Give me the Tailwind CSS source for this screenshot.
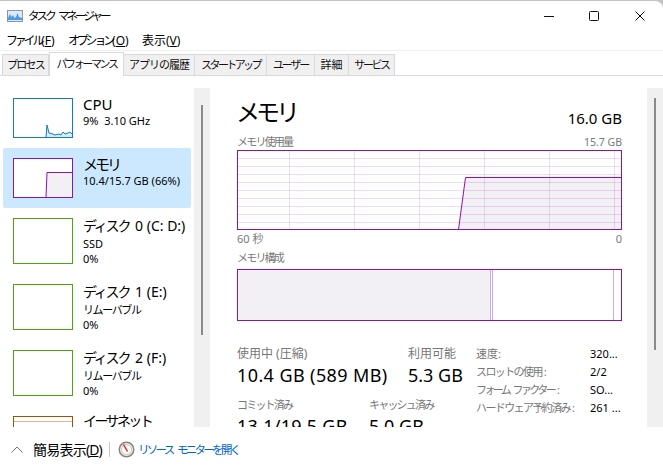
<!DOCTYPE html>
<html lang="ja">
<head>
  <meta charset="UTF-8" />
  <title>タスク マネージャー</title>
  <script src="https://cdn.jsdelivr.net/npm/@tailwindcss/browser@4"></script>
</head>
<body class="w-[663px] h-[472px] overflow-hidden bg-[#c4c4c4] font-['Noto_Sans','Noto_Sans_CJK_JP',sans-serif] text-black">
  <div class="w-full h-[471px] mt-px bg-white rounded-tr-lg flex flex-col overflow-hidden">

    <!-- title bar -->
    <div class="h-[29px] flex items-center shrink-0 relative">
      <svg class="ml-[7px] mr-[5px]" width="16" height="12" viewBox="0 0 16 12">
        <rect x="0.5" y="0.5" width="15" height="11" fill="#dce9f6" stroke="#8c95a0" />
        <path d="M1 10V8L3 4L4.5 7L6 5L7.5 8L9 7L10.5 3L12 7L15 8V10Z" fill="#4a9be0" />
      </svg>
      <span class="text-[11.5px] tracking-[-2.9px] [word-spacing:4px] whitespace-nowrap">タスク マネージャー</span>
      <div class="ml-auto flex items-center">
        <svg class="mr-[35px]" width="10" height="10" viewBox="0 0 10 10"><path d="M0 5.5H10" stroke="#111" /></svg>
        <svg class="mr-[36px]" width="10" height="10" viewBox="0 0 10 10"><rect x="0.5" y="0.5" width="9" height="9" rx="1" fill="none" stroke="#111" /></svg>
        <svg class="mr-[18px]" width="10" height="10" viewBox="0 0 10 10"><path d="M0.5 0.5L9.5 9.5M9.5 0.5L0.5 9.5" stroke="#111" /></svg>
      </div>
    </div>

    <!-- menu -->
    <div class="h-[20px] flex items-center pt-[2px] pl-[6px] text-[12px] shrink-0 whitespace-nowrap">
      <span class="w-[62px]"><span class="tracking-[-3.2px]">ファイル</span>(<span class="underline">F</span>)</span>
      <span class="w-[74px]"><span class="tracking-[-3.2px]">オプション</span>(<span class="underline">O</span>)</span>
      <span>表示(<span class="underline">V</span>)</span>
    </div>
    <div class="h-px bg-[#f0f0f0] shrink-0"></div>

    <!-- tabs -->
    <div class="h-[25px] flex items-end pl-[2px] border-b border-[#d9d9d9] shrink-0 text-[11px] text-[#111] whitespace-nowrap">
      <div class="w-[47px] h-[21px] flex items-center justify-center bg-[#f0f0f0] border border-b-0 border-[#d9d9d9] tracking-[-1.75px]">プロセス</div>
      <div class="w-[75px] h-[24px] flex items-center justify-center bg-white border border-b-0 border-[#d9d9d9] -mb-px tracking-[-2.4px]">パフォーマンス</div>
      <div class="w-[71px] h-[21px] flex items-center justify-center bg-[#f0f0f0] border border-l-0 border-b-0 border-[#d9d9d9] tracking-[-1px]">アプリの履歴</div>
      <div class="w-[72px] h-[21px] flex items-center justify-center bg-[#f0f0f0] border border-l-0 border-b-0 border-[#d9d9d9] tracking-[-2.6px]">スタートアップ</div>
      <div class="w-[48px] h-[21px] flex items-center justify-center bg-[#f0f0f0] border border-l-0 border-b-0 border-[#d9d9d9] tracking-[-2.25px]">ユーザー</div>
      <div class="w-[34px] h-[21px] flex items-center justify-center bg-[#f0f0f0] border border-l-0 border-b-0 border-[#d9d9d9]">詳細</div>
      <div class="w-[46px] h-[21px] flex items-center justify-center bg-[#f0f0f0] border border-l-0 border-b-0 border-[#d9d9d9] tracking-[-2.4px]">サービス</div>
    </div>

    <!-- panes -->
    <div class="h-[339px] mt-[12px] flex shrink-0">

      <!-- sidebar -->
      <div class="w-[194px] pl-[3px] pr-[3px] overflow-hidden shrink-0">
        <div class="h-[60px] flex items-center pl-[10px]">
          <svg class="shrink-0" width="60" height="40" viewBox="0 0 60 40">
            <path d="M33 39V27L34 27L36 35L40 36L42 37L46 36L48 37L50 34L52 36L55 35L57 34L59 36V39Z" fill="#d9ebf6" />
            <path d="M33 39L34 27L36 35L40 36L42 37L46 36L48 37L50 34L52 36L55 35L57 34L59 36" fill="none" stroke="#117dbb" />
            <rect x="0.5" y="0.5" width="59" height="39" fill="none" stroke="#117dbb" />
          </svg>
          <div class="ml-[10px] self-start mt-[6px]">
            <div class="text-[15px] leading-[20px]">CPU</div>
            <div class="text-[11px] leading-[14px]">9%&nbsp; 3.10 GHz</div>
          </div>
        </div>
        <div class="h-[60px] flex items-center pl-[10px] bg-[#cce8ff] rounded-[2px]">
          <svg class="shrink-0" width="60" height="40" viewBox="0 0 60 40">
            <rect width="60" height="40" fill="#fff" />
            <path d="M33 39.5L34.5 14.5H59.5V39.5Z" fill="#f2f0f4" />
            <path d="M33 39.5L34 14.5H59.5" fill="none" stroke="#8b12ae" />
            <rect x="0.5" y="0.5" width="59" height="39" fill="none" stroke="#8b12ae" />
          </svg>
          <div class="ml-[10px] self-start mt-[6px] whitespace-nowrap">
            <div class="text-[15px] leading-[20px] tracking-[-3px]">メモリ</div>
            <div class="text-[11px] leading-[14px]">10.4/15.7 GB (66%)</div>
          </div>
        </div>
        <div class="h-[66px] flex items-center pl-[10px]">
          <div class="w-[60px] h-[46px] border border-[#4da60c] shrink-0"></div>
          <div class="ml-[10px] whitespace-nowrap -mt-px">
            <div class="text-[14px] leading-[20px]"><span class="tracking-[-2.2px]">ディス</span>ク 0 (C: D:)</div>
            <div class="text-[11px] leading-[15px]">SSD</div>
            <div class="text-[11px] leading-[15px]">0%</div>
          </div>
        </div>
        <div class="h-[66px] flex items-center pl-[10px]">
          <div class="w-[60px] h-[46px] border border-[#4da60c] shrink-0"></div>
          <div class="ml-[10px] whitespace-nowrap -mt-px">
            <div class="text-[14px] leading-[20px]"><span class="tracking-[-2.2px]">ディス</span>ク 1 (E:)</div>
            <div class="text-[11px] leading-[15px] tracking-[-1.4px]">リムーバブル</div>
            <div class="text-[11px] leading-[15px]">0%</div>
          </div>
        </div>
        <div class="h-[66px] flex items-center pl-[10px]">
          <div class="w-[60px] h-[46px] border border-[#4da60c] shrink-0"></div>
          <div class="ml-[10px] whitespace-nowrap -mt-px">
            <div class="text-[14px] leading-[20px]"><span class="tracking-[-2.2px]">ディス</span>ク 2 (F:)</div>
            <div class="text-[11px] leading-[15px] tracking-[-1.4px]">リムーバブル</div>
            <div class="text-[11px] leading-[15px]">0%</div>
          </div>
        </div>
        <div class="h-[66px] flex items-start pl-[10px] pt-[10px]">
          <div class="w-[60px] h-[46px] border border-[#a74f01] shrink-0">
            <div class="h-px mt-[4px] bg-[#e0b48c]"></div>
          </div>
          <div class="ml-[10px] -mt-[5px] text-[14px] leading-[20px] tracking-[-2.6px]">イーサネット</div>
        </div>
      </div>

      <!-- sidebar scrollbar -->
      <div class="w-[16px] bg-[#f0f0f0] shrink-0 pt-[17px] pl-[7px]">
        <div class="w-[2px] h-[230px] bg-[#8a8a8a]"></div>
      </div>

      <!-- detail -->
      <div class="w-[437px] pl-[27px] pr-[25px] overflow-hidden shrink-0">
        <div class="h-[45px] flex items-end justify-between">
          <div class="text-[24px] leading-[42px] tracking-[-4px] -ml-px">メモリ</div>
          <div class="text-[15px] leading-[26px] pb-[2px]">16.0 GB</div>
        </div>
        <div class="h-[17px] pt-[2px] flex items-center justify-between text-[#777]">
          <span class="text-[11px] tracking-[-1.8px]">メモリ使用量</span>
          <span class="text-[10.5px]">15.7 GB</span>
        </div>
        <svg class="block" width="385" height="80" viewBox="0 0 385 80">
          <path d="M221.5 79.5L228.5 27.5H385V80H221.5Z" fill="#f2f0f4" />
          <path d="M0 8.5H385M0 16.5H385M0 24.5H385M0 32.5H385M0 40.5H385M0 48.5H385M0 56.5H385M0 64.5H385M0 72.5H385M52.5 0V80M117.5 0V80M182.5 0V80M247.5 0V80M312.5 0V80M377.5 0V80" stroke="#8b12ae" stroke-opacity="0.15" />
          <path d="M221.5 79.5L228.5 27.5H385" fill="none" stroke="#8b12ae" />
          <rect x="0.5" y="0.5" width="384" height="79" fill="none" stroke="#8b12ae" />
        </svg>
        <div class="h-[18px] flex items-center justify-between text-[11px] text-[#777]">
          <span>60 秒</span>
          <span>0</span>
        </div>
        <div class="h-[21px] flex items-center text-[11px] text-[#777] tracking-[-1.8px]">メモリ構成</div>
        <div class="h-[52px] flex border border-[#8b12ae]">
          <div class="w-[253px] bg-[#f2f0f4] border-r border-[#d3a9df]"></div>
          <div class="w-[2px] border-r border-[#d3a9df]"></div>
          <div class="w-[121px] border-r border-[#d3a9df]"></div>
        </div>

        <!-- stats -->
        <div class="mt-[25px] flex">
          <div class="w-[239px] shrink-0">
            <div class="flex">
              <div class="w-[171px]">
                <div class="text-[12px] leading-[16px] text-[#777]">使用中 (圧縮)</div>
                <div class="text-[18px] leading-[26px] whitespace-nowrap tracking-[0.4px]">10.4 GB (589 MB)</div>
              </div>
              <div>
                <div class="text-[12px] leading-[16px] text-[#777]">利用可能</div>
                <div class="text-[18px] leading-[26px] whitespace-nowrap">5.3 GB</div>
              </div>
            </div>
            <div class="flex mt-[9px]">
              <div class="w-[132px]">
                <div class="text-[11px] leading-[16px] text-[#777] tracking-[-1.8px]">コミット済み</div>
                <div class="text-[18px] leading-[26px] whitespace-nowrap tracking-[0.25px]">13.1/19.5 GB</div>
              </div>
              <div>
                <div class="text-[11px] leading-[16px] text-[#777] tracking-[-1.8px]">キャッシュ済み</div>
                <div class="text-[18px] leading-[26px] whitespace-nowrap">5.0 GB</div>
              </div>
            </div>
          </div>
          <div class="-mt-px grid grid-cols-[114px_auto] auto-rows-[18px] items-center text-[11px] whitespace-nowrap">
            <span class="text-[#777]">速度:</span><span>320...</span>
            <span class="text-[#777]"><span class="tracking-[-1.6px]">スロットの使用</span><span class="ml-[2px]">:</span></span><span>2/2</span>
            <span class="text-[#777]"><span class="tracking-[-2.6px] [word-spacing:3px]">フォーム ファクター</span><span class="ml-[3px]">:</span></span><span>SO...</span>
            <span class="text-[#777]"><span class="tracking-[-1.6px]">ハードウェア予約済み</span><span class="ml-[2px]">:</span></span><span>261 ...</span>
          </div>
        </div>
      </div>

      <!-- detail scrollbar -->
      <div class="w-[16px] bg-[#f0f0f0] shrink-0 pt-[10px] pl-[7px]">
        <div class="w-[2px] h-[252px] bg-[#8a8a8a]"></div>
      </div>
    </div>

    <!-- footer -->
    <div class="h-[45px] flex items-center shrink-0 whitespace-nowrap">
      <svg class="ml-[11px]" width="12" height="7" viewBox="0 0 12 7"><path d="M0.5 6.5L6 1L11.5 6.5" fill="none" stroke="#777" /></svg>
      <span class="ml-[10px] w-[76px] text-[14px]"><span class="tracking-[-0.75px]">簡易表示</span><span class="tracking-[-1px]">(<span class="underline">D</span>)</span></span>
      <div class="w-px h-[15px] bg-[#c8c8c8]"></div>
      <svg class="ml-[8px]" width="17" height="17" viewBox="0 0 17 17">
        <circle cx="8.5" cy="8.5" r="7.25" fill="#f4f1ea" stroke="#8a857c" stroke-width="1.5" />
        <circle cx="8.5" cy="8.5" r="5" fill="#fff" stroke="#c9c4ba" />
        <path d="M5.5 3.5L9.5 10.5" stroke="#d8261c" stroke-width="1.5" />
      </svg>
      <span class="ml-[3px] text-[11.5px] tracking-[-2.7px] [word-spacing:4px] text-[#0066cc]">リソース モニターを開く</span>
    </div>
  </div>
</body>
</html>
